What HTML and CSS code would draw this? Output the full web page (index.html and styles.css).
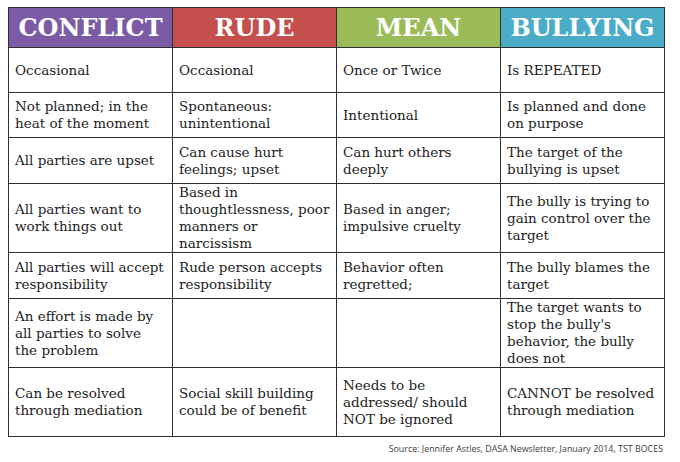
FILE: index.html
```html
<!DOCTYPE html>
<html>
<head>
<meta charset="utf-8">
<link rel="stylesheet" href="styles.css">
</head>
<body>
<div class="page">
<table class="chart">
  <colgroup><col class="c"><col class="c"><col class="c"><col class="c"></colgroup>
  <tr class="head">
    <th class="h-conflict">CONFLICT</th>
    <th class="h-rude">RUDE</th>
    <th class="h-mean">MEAN</th>
    <th class="h-bully">BULLYING</th>
  </tr>
  <tr class="r1">
    <td>Occasional</td>
    <td>Occasional</td>
    <td>Once or Twice</td>
    <td>Is REPEATED</td>
  </tr>
  <tr class="r2">
    <td>Not planned; in the<br>heat of the moment</td>
    <td>Spontaneous:<br>unintentional</td>
    <td>Intentional</td>
    <td>Is planned and done<br>on purpose</td>
  </tr>
  <tr class="r3">
    <td>All parties are upset</td>
    <td>Can cause hurt<br>feelings; upset</td>
    <td>Can hurt others<br>deeply</td>
    <td>The target of the<br>bullying is upset</td>
  </tr>
  <tr class="r4">
    <td>All parties want to<br>work things out</td>
    <td>Based in<br>thoughtlessness, poor<br>manners or<br>narcissism</td>
    <td>Based in anger;<br>impulsive cruelty</td>
    <td>The bully is trying to<br>gain control over the<br>target</td>
  </tr>
  <tr class="r5">
    <td>All parties will accept<br>responsibility</td>
    <td>Rude person accepts<br>responsibility</td>
    <td>Behavior often<br>regretted;</td>
    <td>The bully blames the<br>target</td>
  </tr>
  <tr class="r6">
    <td>An effort is made by<br>all parties to solve<br>the problem</td>
    <td></td>
    <td></td>
    <td>The target wants to<br>stop the bully's<br>behavior, the bully<br>does not</td>
  </tr>
  <tr class="r7">
    <td>Can be resolved<br>through mediation</td>
    <td>Social skill building<br>could be of benefit</td>
    <td>Needs to be<br>addressed/ should<br>NOT be ignored</td>
    <td>CANNOT be resolved<br>through mediation</td>
  </tr>
</table>
<p class="source">Source: Jennifer Astles, DASA Newsletter, January 2014, TST BOCES</p>
</div>
</body>
</html>
```

FILE: styles.css
```css
html, body {
  margin: 0;
  padding: 0;
  background: #ffffff;
}
.page {
  padding: 7px 0 0 8px;
  width: 657px;
}
.chart {
  border-collapse: collapse;
  table-layout: fixed;
  width: 657px;
  border: 1.5px solid #2e2e2e;
}
.chart .c {
  width: 164px;
}
.chart th,
.chart td {
  border: 1.5px solid #2e2e2e;
  padding: 0 4px 0 6px;
  vertical-align: middle;
  white-space: nowrap;
  overflow: hidden;
}
.chart th {
  color: #ffffff;
  font-family: "DejaVu Serif", serif;
  font-weight: bold;
  font-size: 24px;
  line-height: 30px;
  text-align: center;
  padding: 0;
}
.chart td {
  color: #1c1c1c;
  font-family: "DejaVu Serif", serif;
  font-size: 13.5px;
  line-height: 17px;
  text-align: left;
}
.h-conflict { background: #7c5ba6; }
.h-rude { background: #c44f4d; }
.h-mean { background: #9bbb59; }
.h-bully { background: #4aacc6; }
.head { height: 40px; }
.r1 { height: 45px; }
.r2 { height: 45px; }
.r3 { height: 46px; }
.r4 { height: 69px; }
.r5 { height: 46px; }
.r6 { height: 68px; }
.r7 { height: 69px; }
.source {
  margin: 5px 2px 0 0;
  text-align: right;
  font-family: "Open Sans", sans-serif;
  font-size: 8.9px;
  color: #3c3c3c;
}
```
